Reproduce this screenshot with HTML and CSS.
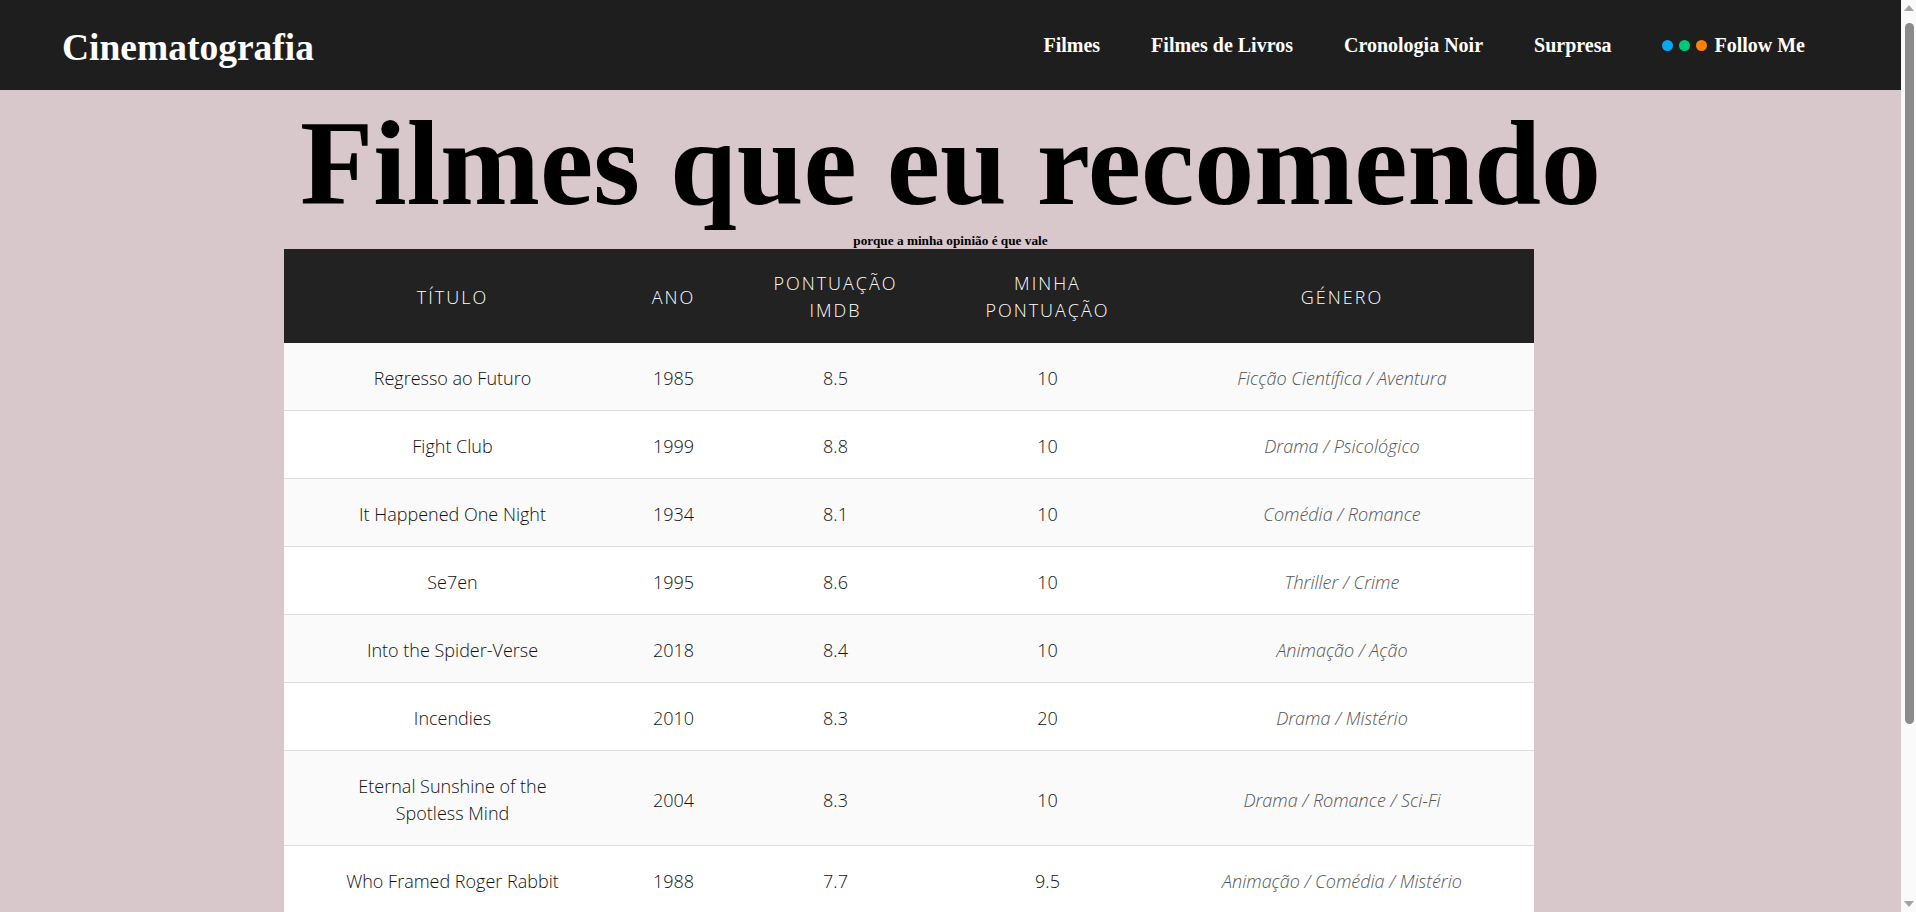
FILE: index.html
```html
<!DOCTYPE html>
<html lang="pt">
<head>
<meta charset="utf-8">
<title>Cinematografia</title>
<link rel="stylesheet" href="styles.css">
</head>
<body>
<nav class="navbar">
  <a class="logo" href="#">Cinematografia</a>
  <ul class="nav-links">
    <li><a href="#">Filmes</a></li>
    <li><a href="#">Filmes de Livros</a></li>
    <li><a href="#">Cronologia Noir</a></li>
    <li><a href="#">Surpresa</a></li>
    <li class="follow"><span class="dot dot-blue"></span><span class="dot dot-green"></span><span class="dot dot-orange"></span><a href="#">Follow Me</a></li>
  </ul>
</nav>
<main class="content">
  <h1 class="title">Filmes que eu recomendo</h1>
  <h5 class="subtitle">porque a minha opinião é que vale</h5>
  <table class="movies">
    <colgroup>
      <col class="c-title">
      <col class="c-year">
      <col class="c-imdb">
      <col class="c-mine">
      <col class="c-genre">
    </colgroup>
    <thead>
      <tr>
        <th>Título</th>
        <th>Ano</th>
        <th>Pontuação IMDB</th>
        <th>Minha Pontuação</th>
        <th>Género</th>
      </tr>
    </thead>
    <tbody>
      <tr><td>Regresso ao Futuro</td><td>1985</td><td>8.5</td><td>10</td><td class="genre">Ficção Científica / Aventura</td></tr>
      <tr><td>Fight Club</td><td>1999</td><td>8.8</td><td>10</td><td class="genre">Drama / Psicológico</td></tr>
      <tr><td>It Happened One Night</td><td>1934</td><td>8.1</td><td>10</td><td class="genre">Comédia / Romance</td></tr>
      <tr><td>Se7en</td><td>1995</td><td>8.6</td><td>10</td><td class="genre">Thriller / Crime</td></tr>
      <tr><td>Into the Spider-Verse</td><td>2018</td><td>8.4</td><td>10</td><td class="genre">Animação / Ação</td></tr>
      <tr><td>Incendies</td><td>2010</td><td>8.3</td><td>20</td><td class="genre">Drama / Mistério</td></tr>
      <tr><td>Eternal Sunshine of the Spotless Mind</td><td>2004</td><td>8.3</td><td>10</td><td class="genre">Drama / Romance / Sci-Fi</td></tr>
      <tr><td>Who Framed Roger Rabbit</td><td>1988</td><td>7.7</td><td>9.5</td><td class="genre">Animação / Comédia / Mistério</td></tr>
      <tr><td>The Third Man</td><td>1949</td><td>8.1</td><td>10</td><td class="genre">Noir / Thriller</td></tr>
      <tr><td>Parasite</td><td>2019</td><td>8.5</td><td>10</td><td class="genre">Drama / Thriller</td></tr>
      <tr><td>Amélie</td><td>2001</td><td>8.3</td><td>9.5</td><td class="genre">Comédia / Romance</td></tr>
    </tbody>
  </table>
</main>
<div class="scrollbar" aria-hidden="true">
  <span class="sb-arrow sb-up"></span>
  <span class="sb-thumb"></span>
  <span class="sb-arrow sb-down"></span>
</div>
</body>
</html>
```

FILE: styles.css
```css
html, body {
  margin: 0;
  padding: 0;
}

body {
  width: 1901px;
  background: #d8c7cb;
  font-family: "Liberation Serif", "Times New Roman", serif;
  color: #000;
  padding-bottom: 26px;
}

.navbar {
  display: flex;
  align-items: center;
  justify-content: space-between;
  height: 90px;
  background: #1e1e1e;
  padding: 0 96px 0 62px;
}

.logo {
  color: #fff;
  text-decoration: none;
  font-weight: bold;
  font-size: 37.5px;
  padding-top: 4px;
}

.nav-links {
  display: flex;
  align-items: center;
  gap: 51px;
  list-style: none;
  margin: 0;
  padding: 0;
}

.nav-links a {
  color: #fff;
  text-decoration: none;
  font-weight: bold;
  font-size: 20px;
}

.follow {
  display: flex;
  align-items: center;
}

.dot {
  display: inline-block;
  width: 11px;
  height: 11px;
  border-radius: 50%;
  margin-right: 6px;
}

.dot-orange { margin-right: 7px; }
.dot-blue { background: #03a9f4; }
.dot-green { background: #00c878; }
.dot-orange { background: #ff8000; }

.content {
  display: block;
}

.title {
  margin: 5px 0 0;
  text-align: center;
  font-size: 120px;
  font-weight: bold;
  line-height: normal;
}

.subtitle {
  margin: 0;
  text-align: center;
  font-size: 13.28px;
  font-weight: bold;
}

.movies {
  margin: 0 0 0 284px;
  width: 1250px;
  table-layout: fixed;
  border-collapse: collapse;
  font-family: "Open Sans", "Noto Sans", sans-serif;
  font-weight: 300;
  font-size: 18px;
  line-height: 27px;
  text-align: center;
  background: #fff;
}

.c-title { width: 337px; }
.c-year { width: 105px; }
.c-imdb { width: 219px; }
.c-mine { width: 205px; }
.c-genre { width: 384px; }

.movies thead tr {
  background: #222222;
}

.movies th {
  color: #ffffff;
  font-weight: 300;
  text-transform: uppercase;
  letter-spacing: 2px;
  padding: 21px 20px 19px;
}

.movies td {
  padding: 22px 20px 18px;
  color: #111;
  border-bottom: 1px solid #dddddd;
}

.movies td:first-child {
  padding-left: 46px;
  padding-right: 46px;
}

.movies tbody tr:nth-child(odd) {
  background: #fafafa;
}

.movies tbody tr:nth-child(even) {
  background: #ffffff;
}

.movies td.genre {
  font-style: italic;
  color: #555;
}

/* simulated browser scrollbar */
.scrollbar {
  position: fixed;
  top: 0;
  right: 0;
  width: 15px;
  height: 100vh;
  background: #fafafa;
}

.sb-thumb {
  position: absolute;
  top: 23px;
  left: 4px;
  width: 9px;
  height: 701px;
  border-radius: 5px;
  background: #8b8b8b;
}

.sb-arrow {
  position: absolute;
  left: 3px;
  width: 0;
  height: 0;
  border-left: 5px solid transparent;
  border-right: 5px solid transparent;
}

.sb-up {
  top: 5px;
  border-bottom: 6px solid #a3a3a3;
}

.sb-down {
  bottom: 5px;
  border-top: 6px solid #a3a3a3;
}
```
